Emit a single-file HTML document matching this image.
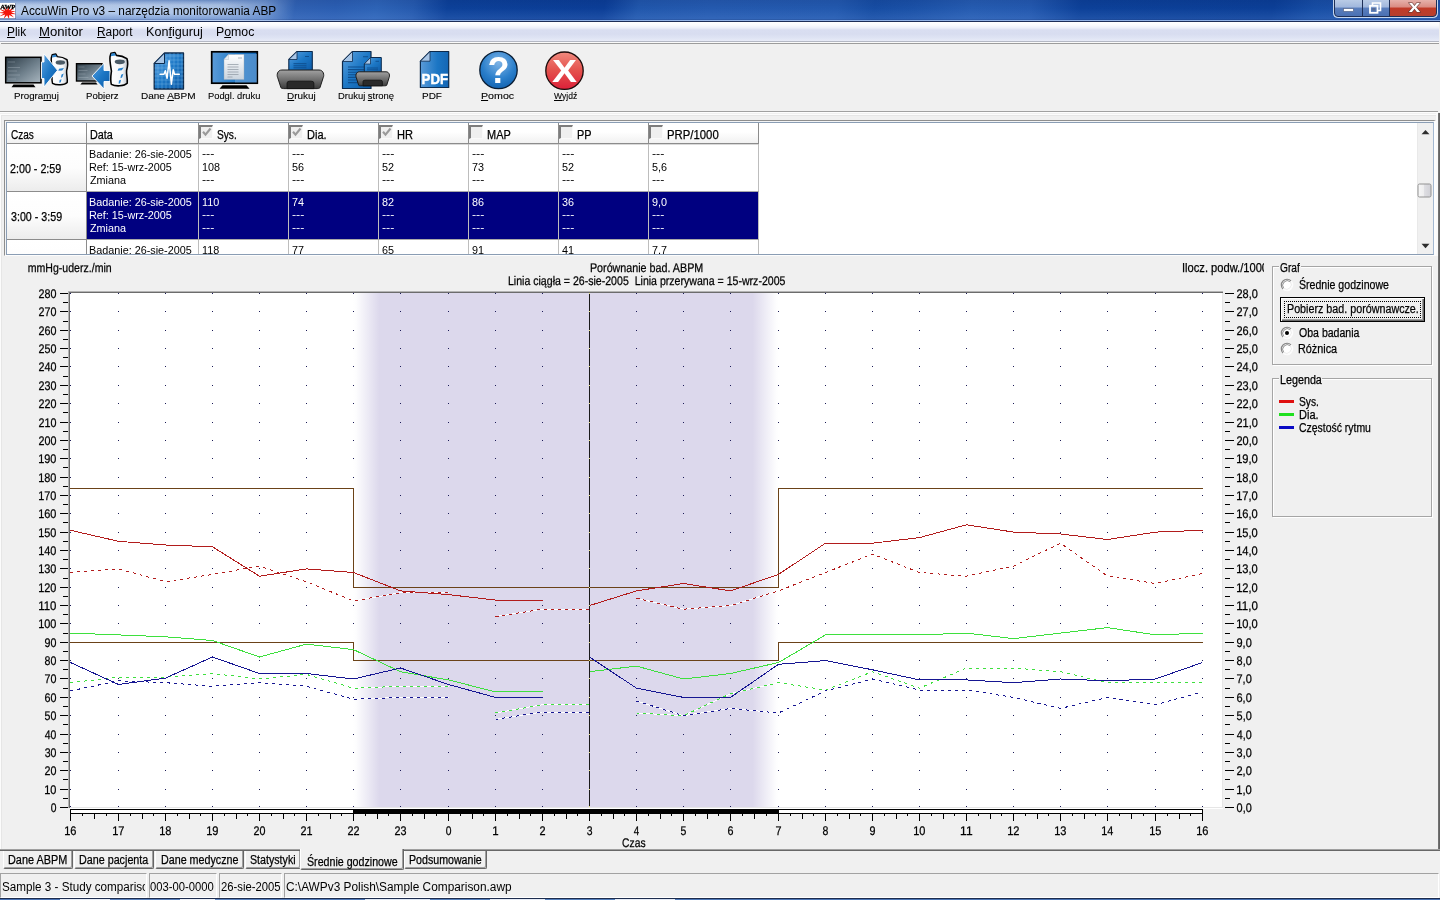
<!DOCTYPE html>
<html lang="pl"><head><meta charset="utf-8"><title>AccuWin Pro v3 – narzędzia monitorowania ABP</title>
<style>
html,body{margin:0;padding:0}
body{width:1440px;height:900px;overflow:hidden;position:relative;background:#f0f0f0;
 font-family:"Liberation Sans",sans-serif;color:#000}
.t{position:absolute;display:block;white-space:pre;transform-origin:0 0}
.abs,div,svg{position:absolute}
u{text-decoration:underline;text-underline-offset:1px}
#app{left:0;top:0;width:1440px;height:900px;will-change:transform}
.t{-webkit-text-stroke:0.25px currentColor}
#chart text{stroke:#000;stroke-width:0.25px}
.t.n{-webkit-text-stroke:0}
.t.s{-webkit-text-stroke:0.1px currentColor}

</style></head>
<body>
<div id="app">
<div id="titlebar" style="left:0;top:0;width:1440px;height:22px;overflow:hidden;background:#0c3f97">
<div style="left:0;top:0;width:1440px;height:20px;background:linear-gradient(100deg,#a9c2e6 0px,#a6bfe5 150px,#98b4de 220px,#6c91cc 262px,#2f60b1 292px,#2a5db1 332px,#2d63b6 372px,#2559ad 408px,#0c4098 442px,#0b3d96 596px,#2056ab 630px,#2459ae 700px,#2258ad 826px,#164ca2 862px,#1a50a6 898px,#255bb0 958px,#2358ae 1016px,#0c4098 1066px,#0b3e96 1255px,#174da4 1296px,#1c50a6 1336px,#1c50a6 1440px)"></div>
<div style="left:0;top:0;width:1440px;height:20px;background:linear-gradient(180deg,rgba(0,10,60,.08) 0,rgba(255,255,255,0) 8px,rgba(140,185,255,.14) 19px)"></div>
<div style="left:0;top:0;width:300px;height:20px;background:linear-gradient(180deg,rgba(50,95,170,.42) 0,rgba(80,120,190,.20) 2px,rgba(255,255,255,.16) 5px,rgba(255,255,255,.16) 13px,rgba(60,100,175,.30) 19px);-webkit-mask-image:linear-gradient(90deg,#000 0,#000 215px,transparent 290px);mask-image:linear-gradient(90deg,#000 0,#000 215px,transparent 290px)"></div>
<div style="left:0;top:19px;width:1440px;height:1px;background:rgba(10,30,90,.16)"></div>
<div style="left:0;top:20px;width:1440px;height:1px;background:linear-gradient(90deg,#c3d6f4 0,#bdd2f2 230px,#93b3e6 300px,#8fb0e4 1440px)"></div>
<div style="left:0;top:21px;width:1440px;height:1px;background:#1d2e58"></div>
<svg style="left:0;top:3px" width="16" height="16" viewBox="0 3 16 16"><rect x="0" y="3" width="16" height="16" fill="#fff"/><path d="M16.8 10.6L11.4 12.6L16.9 14.4L10.8 14.0L14.0 17.5L9.2 14.9L9.1 19.1L7.1 15.2L3.7 18.7L5.2 14.6L-0.5 16.3L4.0 13.4L-2.1 12.7L4.0 11.9L-0.6 9.1L5.1 10.7L3.5 6.6L7.0 10.0L8.8 6.0L9.1 10.2L13.8 7.5L10.8 11.2z" fill="#f4160c"/><text x="0.2" y="8.8" font-family="Liberation Serif,serif" font-weight="bold" font-size="7" textLength="15.300" lengthAdjust="spacingAndGlyphs" fill="#000" stroke="#000" stroke-width=".3">AWP</text><path d="M0 18.500h16M15.500 3v16" stroke="#5a6c9c" stroke-width="1" opacity=".7" fill="none"/></svg>
<span class="t n" style="left:21.40px;top:4px;font-size:12.5px;line-height:14px;transform:scaleX(0.9467);">AccuWin Pro v3 – narzędzia monitorowania ABP</span>
<svg style="left:1332px;top:0" width="108" height="20" viewBox="0 0 108 20"><defs><linearGradient id="wb1" x1="0" y1="0" x2="0" y2="1"><stop offset="0" stop-color="#b9cbe6"/><stop offset=".45" stop-color="#9fb6dc"/><stop offset=".46" stop-color="#5b7fbd"/><stop offset="1" stop-color="#4a70b3"/></linearGradient><linearGradient id="wb2" x1="0" y1="0" x2="0" y2="1"><stop offset="0" stop-color="#e6b1aa"/><stop offset=".45" stop-color="#d98a80"/><stop offset=".46" stop-color="#c23a27"/><stop offset="1" stop-color="#b5402f"/></linearGradient></defs><path d="M1.5 -1V13.5a4 4 0 0 0 4 4H101.5a4 4 0 0 0 4-4V-1z" fill="#dfe9f7" stroke="#c5d6ee" stroke-width="1"/><path d="M2.5 0V13a3.5 3.5 0 0 0 3.5 3.5H30V0z" fill="url(#wb1)"/><path d="M31 0H57V16.5H31z" fill="url(#wb1)"/><path d="M58 0H104.5V13a3.5 3.5 0 0 1-3.5 3.5H58z" fill="url(#wb2)"/><path d="M2.5 0V13a3.5 3.5 0 0 0 3.5 3.5H101a3.5 3.5 0 0 0 3.5-3.5V0M30.5 0V16.5M57.5 0V16.5" fill="none" stroke="#1e2f57" stroke-width="1"/><rect x="11.5" y="8.5" width="10" height="3" fill="#fff" stroke="#5a6c92" stroke-width=".8"/><path d="M40.5 5.5v-2.500h8v7.500h-2.500" fill="none" stroke="#fff" stroke-width="1.6"/><rect x="38" y="5.800" width="7.500" height="7" fill="none" stroke="#fff" stroke-width="1.800"/><rect x="40.200" y="8" width="3" height="2.600" fill="#5a6c92"/><text x="76.700" y="12.300" font-family="Liberation Sans,sans-serif" font-weight="bold" font-size="16" textLength="11.500" lengthAdjust="spacingAndGlyphs" fill="#fff" stroke="#5e3732" stroke-width="1" paint-order="stroke">x</text></svg>
</div>
<div id="menubar" style="left:0;top:22px;width:1440px;height:22px;background:#f0f0f0">
<div style="left:0;top:0;width:1439px;height:19px;background:linear-gradient(180deg,#fff 0,#fafbfe 3px,#eceff9 6px,#e2e6f5 7px,#d9def1 8px,#d8ddf0 12px,#dfe4f4 16px,#e8ebf7 19px)"></div>
<div style="left:0;top:19px;width:1439px;height:1px;background:#b4b8c4"></div>
<div style="left:0;top:20px;width:1439px;height:1px;background:#fafafa"></div>
<div style="left:1px;top:21px;width:1438px;height:1px;background:#9c9c9c"></div>
<span class="t n" style="left:6.95px;top:3px;font-size:12.5px;line-height:14px;transform:scaleX(0.9485);"><u>P</u>lik</span>
<span class="t n" style="left:39.25px;top:3px;font-size:12.5px;line-height:14px;transform:scaleX(1.0519);"><u>M</u>onitor</span>
<span class="t n" style="left:96.55px;top:3px;font-size:12.5px;line-height:14px;transform:scaleX(0.9507);"><u>R</u>aport</span>
<span class="t n" style="left:145.69px;top:3px;font-size:12.5px;line-height:14px;transform:scaleX(1.0085);">Kon<u>f</u>iguruj</span>
<span class="t n" style="left:215.61px;top:3px;font-size:12.5px;line-height:14px;transform:scaleX(0.9850);">P<u>o</u>moc</span>
</div>
<div id="toolbar" style="left:0;top:44px;width:1440px;height:69px">
<div style="left:0;top:67px;width:1438px;height:1px;background:#a0a0a0"></div>
<div style="left:0;top:68px;width:1438px;height:1px;background:#fdfdfd"></div>
<svg width="0" height="0" style="left:0;top:0"><defs><linearGradient id="gScr" x1="0" y1="0" x2="1" y2="1"><stop offset="0" stop-color="#2c3b46"/><stop offset=".55" stop-color="#6f808c"/><stop offset="1" stop-color="#a9b6bf"/></linearGradient><linearGradient id="gBlu" x1="0" y1="0" x2="1" y2="1"><stop offset="0" stop-color="#5fa3e0"/><stop offset=".5" stop-color="#1d78c6"/><stop offset="1" stop-color="#0d5aa6"/></linearGradient><linearGradient id="gBlu2" x1="0" y1="0" x2="1" y2="0"><stop offset="0" stop-color="#5b9bd8"/><stop offset=".6" stop-color="#1c76c4"/><stop offset="1" stop-color="#1466b4"/></linearGradient><linearGradient id="gDev" x1="0" y1="0" x2="1" y2="0"><stop offset="0" stop-color="#fff"/><stop offset=".7" stop-color="#f4f6f8"/><stop offset="1" stop-color="#b9c0c8"/></linearGradient><linearGradient id="gPrn" x1="0" y1="0" x2="0" y2="1"><stop offset="0" stop-color="#a2a2a2"/><stop offset=".5" stop-color="#707070"/><stop offset="1" stop-color="#3c3c3c"/></linearGradient><linearGradient id="gPap" x1="0" y1="0" x2="0" y2="1"><stop offset="0" stop-color="#fff"/><stop offset="1" stop-color="#c9d3dd"/></linearGradient><radialGradient id="gHelp" cx=".5" cy=".3" r=".8"><stop offset="0" stop-color="#7fb4e6"/><stop offset=".55" stop-color="#2b7fcb"/><stop offset="1" stop-color="#0b5aa8"/></radialGradient><linearGradient id="gExit" x1="0" y1="0" x2="0" y2="1"><stop offset="0" stop-color="#f08a7e"/><stop offset=".5" stop-color="#e4514d"/><stop offset="1" stop-color="#dd2039"/></linearGradient></defs></svg>
<svg style="left:0;top:4px" width="72" height="44" viewBox="0 48 72 44"><rect x="5.700" y="57.300" width="35.300" height="25.500" fill="url(#gScr)" stroke="#000" stroke-width="1.500"/><path d="M8 62h7M8 67.500h12M8 71h9M8 75h12M8 79h8" stroke="#b8c4cc" stroke-width=".6" opacity=".55"/><path d="M13.500 84.600h20l2 2.600h-24z" fill="#000"/><g transform="translate(48.8,53.5) scale(0.98)"><path d="M3.500 1.200L7.200 .6L8.600 3.200C12 3.400 15.500 4.200 18.500 6.200C19.800 10 19.200 14 18.200 17.500C17.800 21 19.300 25 18.800 29.500C16 32.300 8 32.800 3.800 30.500C2.600 26 3.400 22 3.900 18C3.200 13 2 8 2.600 4.200z" fill="url(#gDev)" stroke="#000" stroke-width="1.500" stroke-linejoin="round"/><path d="M3.900 1.500L7 1L8 3.400L3.300 4z" fill="#2f86cf"/><ellipse cx="11.800" cy="9.300" rx="4.800" ry="2.300" fill="#4a5a66"/><path d="M10.500 15.500l5-.8-1.800 2.600-4 .4zM13 21.500l2.200-1-1.200 3.600-1.600.6zM11 27l2-.8-.8 3.200-1.500.5z" fill="#2a82cc"/></g><path d="M41.500 62h2.500v-8.200L57.500 70.300L44 87v-8.500h-2.500z" fill="url(#gBlu)" stroke="#fff" stroke-width=".9"/></svg>
<span class="t s" style="left:14.02px;top:46px;font-size:9.6px;line-height:11px;transform:scaleX(1.0148);">Progra<u>m</u>uj</span>
<svg style="left:72px;top:4px" width="62" height="44" viewBox="72 48 62 44"><rect x="76.500" y="63.700" width="25.500" height="17.300" fill="url(#gScr)" stroke="#000" stroke-width="1.400"/><path d="M78.500 67h6M78.500 70.500h9M78.500 74h7M78.500 77.500h10" stroke="#b8c4cc" stroke-width=".6" opacity=".5"/><path d="M82 82.400h14l1.600 2h-17.200z" fill="#000"/><path d="M110 70.500h-6v-7.300L92 76l12 13v-7.500h6z" fill="url(#gBlu)" stroke="#fff" stroke-width=".9"/><g transform="translate(107.3,52) scale(1.06)"><path d="M3.500 1.200L7.200 .6L8.600 3.200C12 3.400 15.500 4.200 18.500 6.200C19.800 10 19.200 14 18.200 17.500C17.800 21 19.300 25 18.800 29.500C16 32.300 8 32.800 3.800 30.500C2.600 26 3.400 22 3.900 18C3.200 13 2 8 2.600 4.200z" fill="url(#gDev)" stroke="#000" stroke-width="1.500" stroke-linejoin="round"/><path d="M3.900 1.500L7 1L8 3.400L3.300 4z" fill="#2f86cf"/><ellipse cx="11.800" cy="9.300" rx="4.800" ry="2.300" fill="#4a5a66"/><path d="M10.500 15.500l5-.8-1.800 2.600-4 .4zM13 21.500l2.200-1-1.200 3.600-1.600.6zM11 27l2-.8-.8 3.200-1.500.5z" fill="#2a82cc"/></g></svg>
<span class="t s" style="left:86.03px;top:46px;font-size:9.6px;line-height:11px;">Pob<u>i</u>erz</span>
<svg style="left:150px;top:4px" width="40" height="44" viewBox="150 48 40 44"><path d="M164.500 53h19v36h-29.300V63.500z" fill="url(#gBlu)" stroke="#0c2a4c" stroke-width="1.300" stroke-linejoin="round"/><path d="M158 64v25M162 60v29M166 56v33M170 53v36M174 53v36M178 53v36M182 53v36M154.500 68h29M154.500 72h29M154.500 76h29M154.500 80h29M154.500 84h29M160 64h23.500M164 60h19.500M166 56h17.500" stroke="#9fd0f4" stroke-width=".5" opacity=".6"/><path d="M164.500 53v10.500h-10.300z" fill="#a9c6e6" stroke="#0c2a4c" stroke-width="1" stroke-linejoin="round"/><path d="M160 74.200h4l1.300-3.500 1.800 7.500 2-17.500 2.300 23.500 1.800-14.500 1.300 4.500h4.800" fill="none" stroke="#fff" stroke-width="1.500" stroke-linejoin="round" stroke-linecap="round"/></svg>
<span class="t s" style="left:141.20px;top:46px;font-size:9.6px;line-height:11px;transform:scaleX(1.0436);">Dane <u>A</u>BPM</span>
<svg style="left:206px;top:4px" width="58" height="44" viewBox="206 48 58 44"><rect x="211.700" y="51.800" width="45.600" height="31.400" fill="url(#gBlu2)" stroke="#000" stroke-width="1.700"/><path d="M236 55.500h13.500v12" fill="none" stroke="#9ec2e8" stroke-width="0" /><rect x="235" y="54" width="22" height="28.500" fill="#8fb8e4" opacity=".45"/><path d="M228.500 54.500h15.500v25h-20v-20z" fill="url(#gPap)" stroke="#9aa7b4" stroke-width=".4"/><path d="M228.500 54.500v5h-4.500z" fill="#e8edf2" stroke="#aab4be" stroke-width=".4"/><path d="M227.500 64.500h11M227.500 67h11M227.500 69.500h11M227.500 72h11M227.500 74.500h11M227.500 77h5M238 58h4" stroke="#8d97a1" stroke-width=".7"/><path d="M222.500 85.300h24l3 3.500h-30z" fill="#000"/></svg>
<span class="t s" style="left:208.15px;top:46px;font-size:9.6px;line-height:11px;transform:scaleX(0.9731);">Podgl. druku</span>
<svg style="left:272px;top:4px" width="58" height="44" viewBox="272 48 58 44"><path d="M297 51.500h15.300v19h-23.500v-11z" fill="url(#gBlu)" stroke="#0c2a4c" stroke-width="1.100" stroke-linejoin="round"/><path d="M297 51.500v8h-8.200z" fill="#a9c6e6" stroke="#0c2a4c" stroke-width=".8" stroke-linejoin="round"/><path d="M305 56.500h4M293.500 63.700h13M293.500 65.800h13M293.500 67.800h13" stroke="#0f4f8f" stroke-width="1"/><path d="M281.93 70.00H318.97C323.60 70.00 324.53 75.21 323.14 77.81L319.90 87.86Q318.97 88.60 317.12 88.60H283.78Q281.93 88.60 281.00 87.86L277.76 77.81C276.37 75.21 277.30 70.00 281.93 70.00z" fill="url(#gPrn)" stroke="#1c1c1c" stroke-width="1"/><path d="M287.02 88.60V83.02Q287.02 81.16 289.80 81.16H311.10Q313.88 81.16 313.88 83.02V88.60z" fill="#2a2a2a" stroke="#111" stroke-width=".8"/></svg>
<span class="t s" style="left:286.50px;top:46px;font-size:9.6px;line-height:11px;transform:scaleX(1.0360);"><u>D</u>rukuj</span>
<svg style="left:336px;top:4px" width="60" height="44" viewBox="336 48 60 44"><path d="M352.500 51.500h18.500v37h-28.500v-27z" fill="url(#gBlu)" stroke="#0c2a4c" stroke-width="1.200" stroke-linejoin="round"/><path d="M352.500 51.500v10h-10z" fill="#a9c6e6" stroke="#0c2a4c" stroke-width=".8" stroke-linejoin="round"/><path d="M363 56.800h5M348 67h18M348 69.600h18M348 72.200h18M348 74.800h18M348 77.400h18M348 80h18M348 82.600h18" stroke="#0f4f8f" stroke-width="1.100"/><path d="M370.500 57.500h10.800v15h-17v-8.500z" fill="url(#gBlu)" stroke="#0c2a4c" stroke-width="1" stroke-linejoin="round"/><path d="M370.500 57.500v6.500h-6.200z" fill="#a9c6e6" stroke="#0c2a4c" stroke-width=".7" stroke-linejoin="round"/><path d="M375.500 61.300h3.500M367 68h11M367 69.800h11" stroke="#0f4f8f" stroke-width=".9"/><path d="M359.34 71.80H386.06C389.40 71.80 390.07 75.72 389.07 77.68L386.73 85.24Q386.06 85.80 384.72 85.80H360.68Q359.34 85.80 358.67 85.24L356.33 77.68C355.33 75.72 356.00 71.80 359.34 71.80z" fill="url(#gPrn)" stroke="#1c1c1c" stroke-width="1"/><path d="M363.01 85.80V81.60Q363.01 80.20 365.02 80.20H380.38Q382.39 80.20 382.39 81.60V85.80z" fill="#2a2a2a" stroke="#111" stroke-width=".8"/></svg>
<span class="t s" style="left:338.15px;top:46px;font-size:9.6px;line-height:11px;transform:scaleX(0.9818);">Drukuj <u>s</u>tronę</span>
<svg style="left:414px;top:4px" width="40" height="44" viewBox="414 48 40 44"><path d="M430 51.500h18.700v36h-28.300V61.200z" fill="url(#gBlu2)" stroke="#0c2a4c" stroke-width="1.200" stroke-linejoin="round"/><path d="M430 51.500v9.700h-9.600z" fill="#a9c6e6" stroke="#0c2a4c" stroke-width=".8" stroke-linejoin="round"/><text x="421.600" y="83.700" font-family="Liberation Sans,sans-serif" font-weight="bold" font-size="15.5" textLength="26.400" lengthAdjust="spacingAndGlyphs" fill="#fff" stroke="#fff" stroke-width=".5">PDF</text></svg>
<span class="t s" style="left:422.10px;top:46px;font-size:9.6px;line-height:11px;transform:scaleX(1.0389);">PDF</span>
<svg style="left:474px;top:4px" width="50" height="44" viewBox="474 48 50 44"><circle cx="498.500" cy="70" r="18.700" fill="url(#gHelp)" stroke="#0a1d33" stroke-width="1.300"/><text x="498.500" y="82.800" text-anchor="middle" font-family="Liberation Sans,sans-serif" font-weight="bold" font-size="36" fill="#fff">?</text></svg>
<span class="t s" style="left:481.35px;top:46px;font-size:9.6px;line-height:11px;transform:scaleX(1.1093);"><u>P</u>omoc</span>
<svg style="left:540px;top:4px" width="50" height="44" viewBox="540 48 50 44"><circle cx="564.500" cy="70.700" r="18.700" fill="url(#gExit)" stroke="#1a0a0a" stroke-width="1.300"/><text x="564.600" y="82.200" text-anchor="middle" font-family="Liberation Sans,sans-serif" font-weight="bold" font-size="31" textLength="25" lengthAdjust="spacingAndGlyphs" fill="#fff">X</text></svg>
<span class="t s" style="left:553.50px;top:46px;font-size:9.6px;line-height:11px;transform:scaleX(0.8934);"><u>W</u>yjdź</span>
</div>
<div style="left:1436px;top:113px;width:2px;height:736px;background:#fafafa"></div>
<div style="left:1438px;top:113px;width:2px;height:738px;background:linear-gradient(90deg,#787878,#5c5c5c)"></div>
<div style="left:0;top:114px;width:1px;height:735px;background:#fcfcfc"></div>
<div style="left:0;top:114px;width:1438px;height:1px;background:#fcfcfc"></div>
<div style="left:1px;top:115px;width:1px;height:734px;background:#e6e6e6"></div>
<div style="left:1px;top:115px;width:1435px;height:1px;background:#e6e6e6"></div>
<div id="grid" style="left:4px;top:120px;width:1432px;height:136px;box-sizing:border-box;border-top:1px solid #8e8e8e;border-left:1px solid #8e8e8e;border-right:2px solid #fdfdfd;border-bottom:1px solid #fdfdfd;background:#f3f4f5">
<div style="left:1px;top:1px;width:1428px;height:133px;box-sizing:border-box;border:1px solid #8a9db4;border-right-color:#a3b8d1;background:#fff"></div>
</div>
<div id="gridin" style="left:7px;top:123px;width:1426px;height:131px;overflow:hidden;background:#fff">
<div style="left:0px;top:0;width:79px;height:20px;background:linear-gradient(180deg,#fff 0,#fff 45%,#f1f1f1 100%);border-right:1px solid #8c8c8c;border-bottom:1px solid #8c8c8c"></div>
<div style="left:80px;top:0;width:111px;height:20px;background:linear-gradient(180deg,#fff 0,#fff 45%,#f1f1f1 100%);border-right:1px solid #8c8c8c;border-bottom:1px solid #8c8c8c"></div>
<div style="left:192px;top:0;width:89px;height:20px;background:linear-gradient(180deg,#fff 0,#fff 45%,#f1f1f1 100%);border-right:1px solid #8c8c8c;border-bottom:1px solid #8c8c8c"></div>
<div style="left:282px;top:0;width:89px;height:20px;background:linear-gradient(180deg,#fff 0,#fff 45%,#f1f1f1 100%);border-right:1px solid #8c8c8c;border-bottom:1px solid #8c8c8c"></div>
<div style="left:372px;top:0;width:89px;height:20px;background:linear-gradient(180deg,#fff 0,#fff 45%,#f1f1f1 100%);border-right:1px solid #8c8c8c;border-bottom:1px solid #8c8c8c"></div>
<div style="left:462px;top:0;width:89px;height:20px;background:linear-gradient(180deg,#fff 0,#fff 45%,#f1f1f1 100%);border-right:1px solid #8c8c8c;border-bottom:1px solid #8c8c8c"></div>
<div style="left:552px;top:0;width:89px;height:20px;background:linear-gradient(180deg,#fff 0,#fff 45%,#f1f1f1 100%);border-right:1px solid #8c8c8c;border-bottom:1px solid #8c8c8c"></div>
<div style="left:642px;top:0;width:109px;height:20px;background:linear-gradient(180deg,#fff 0,#fff 45%,#f1f1f1 100%);border-right:1px solid #8c8c8c;border-bottom:1px solid #8c8c8c"></div>
<div style="left:0;top:21px;width:752px;height:1px;background:#d9d9d9"></div>
<span class="t" style="left:3.50px;top:5px;font-size:12.5px;line-height:14px;transform:scaleX(0.8018);">Czas</span>
<span class="t" style="left:82.84px;top:5px;font-size:12.5px;line-height:14px;transform:scaleX(0.8649);">Data</span>
<div style="left:192px;top:2px;width:14px;height:14px;box-sizing:border-box;background:#efefef;border-top:2px solid #7d7d7d;border-left:2px solid #7d7d7d;border-right:1px solid #fafafa;border-bottom:1px solid #fafafa"></div>
<svg style="left:192px;top:2px" width="14" height="14" viewBox="0 0 14 14"><path d="M4 6.800l2.500 2.900 5-6.200" fill="none" stroke="#9a9a9a" stroke-width="2.100"/></svg>
<span class="t" style="left:210.44px;top:5px;font-size:12.5px;line-height:14px;transform:scaleX(0.8133);">Sys.</span>
<div style="left:282px;top:2px;width:14px;height:14px;box-sizing:border-box;background:#efefef;border-top:2px solid #7d7d7d;border-left:2px solid #7d7d7d;border-right:1px solid #fafafa;border-bottom:1px solid #fafafa"></div>
<svg style="left:282px;top:2px" width="14" height="14" viewBox="0 0 14 14"><path d="M4 6.800l2.500 2.900 5-6.200" fill="none" stroke="#9a9a9a" stroke-width="2.100"/></svg>
<span class="t" style="left:300.02px;top:5px;font-size:12.5px;line-height:14px;transform:scaleX(0.8795);">Dia.</span>
<div style="left:372px;top:2px;width:14px;height:14px;box-sizing:border-box;background:#efefef;border-top:2px solid #7d7d7d;border-left:2px solid #7d7d7d;border-right:1px solid #fafafa;border-bottom:1px solid #fafafa"></div>
<svg style="left:372px;top:2px" width="14" height="14" viewBox="0 0 14 14"><path d="M4 6.800l2.500 2.900 5-6.200" fill="none" stroke="#9a9a9a" stroke-width="2.100"/></svg>
<span class="t" style="left:390.02px;top:5px;font-size:12.5px;line-height:14px;transform:scaleX(0.8848);">HR</span>
<div style="left:462px;top:2px;width:14px;height:14px;box-sizing:border-box;background:#efefef;border-top:2px solid #7d7d7d;border-left:2px solid #7d7d7d;border-right:1px solid #fafafa;border-bottom:1px solid #fafafa"></div>
<span class="t" style="left:480.02px;top:5px;font-size:12.5px;line-height:14px;transform:scaleX(0.8767);">MAP</span>
<div style="left:552px;top:2px;width:14px;height:14px;box-sizing:border-box;background:#efefef;border-top:2px solid #7d7d7d;border-left:2px solid #7d7d7d;border-right:1px solid #fafafa;border-bottom:1px solid #fafafa"></div>
<span class="t" style="left:570.03px;top:5px;font-size:12.5px;line-height:14px;transform:scaleX(0.8733);">PP</span>
<div style="left:642px;top:2px;width:14px;height:14px;box-sizing:border-box;background:#efefef;border-top:2px solid #7d7d7d;border-left:2px solid #7d7d7d;border-right:1px solid #fafafa;border-bottom:1px solid #fafafa"></div>
<span class="t" style="left:659.99px;top:5px;font-size:12.5px;line-height:14px;transform:scaleX(0.9071);">PRP/1000</span>
<div style="left:0;top:21px;width:79px;height:47px;background:linear-gradient(180deg,#fff 0,#fdfdfd 50%,#ececec 100%);border-right:1px solid #8c8c8c;border-bottom:1px solid #8c8c8c"></div>
<span class="t" style="left:3.46px;top:39px;font-size:12.5px;line-height:14px;transform:scaleX(0.8572);">2:00 - 2:59</span>
<div style="left:0;top:69px;width:79px;height:47px;background:linear-gradient(180deg,#fff 0,#fdfdfd 50%,#ececec 100%);border-right:1px solid #8c8c8c;border-bottom:1px solid #8c8c8c"></div>
<span class="t" style="left:3.63px;top:87px;font-size:12.5px;line-height:14px;transform:scaleX(0.8545);">3:00 - 3:59</span>
<div style="left:0;top:117px;width:79px;height:47px;background:linear-gradient(180deg,#fff 0,#fdfdfd 50%,#ececec 100%);border-right:1px solid #8c8c8c;border-bottom:1px solid #8c8c8c"></div>
<span class="t" style="left:3.79px;top:135px;font-size:12.5px;line-height:14px;transform:scaleX(0.8517);">4:00 - 4:59</span>
<div style="left:80px;top:69px;width:671px;height:47px;background:#000080"></div>
<div style="left:191px;top:21px;width:1px;height:112px;background:#bdbdbd"></div>
<div style="left:281px;top:21px;width:1px;height:112px;background:#bdbdbd"></div>
<div style="left:371px;top:21px;width:1px;height:112px;background:#bdbdbd"></div>
<div style="left:461px;top:21px;width:1px;height:112px;background:#bdbdbd"></div>
<div style="left:551px;top:21px;width:1px;height:112px;background:#bdbdbd"></div>
<div style="left:641px;top:21px;width:1px;height:112px;background:#bdbdbd"></div>
<div style="left:751px;top:21px;width:1px;height:112px;background:#bdbdbd"></div>
<div style="left:80px;top:68px;width:672px;height:1px;background:#a9a9a9"></div>
<div style="left:80px;top:116px;width:672px;height:1px;background:#a9a9a9"></div>
<span class="t n" style="left:82.14px;top:25px;font-size:11px;line-height:12px;transform:scaleX(0.9822);">Badanie: 26-sie-2005</span>
<span class="t n" style="left:82.14px;top:38px;font-size:11px;line-height:12px;transform:scaleX(0.9822);">Ref: 15-wrz-2005</span>
<span class="t n" style="left:82.68px;top:51px;font-size:11px;line-height:12px;transform:scaleX(0.9822);">Zmiana</span>
<span class="t n" style="left:195.31px;top:24px;font-size:11px;line-height:12px;transform:scaleX(1.1227);">---</span>
<span class="t n" style="left:194.99px;top:38px;font-size:11px;line-height:12px;transform:scaleX(0.9822);">108</span>
<span class="t n" style="left:195.31px;top:50px;font-size:11px;line-height:12px;transform:scaleX(1.1227);">---</span>
<span class="t n" style="left:285.31px;top:24px;font-size:11px;line-height:12px;transform:scaleX(1.1227);">---</span>
<span class="t n" style="left:285.37px;top:38px;font-size:11px;line-height:12px;transform:scaleX(0.9822);">56</span>
<span class="t n" style="left:285.31px;top:50px;font-size:11px;line-height:12px;transform:scaleX(1.1227);">---</span>
<span class="t n" style="left:375.31px;top:24px;font-size:11px;line-height:12px;transform:scaleX(1.1227);">---</span>
<span class="t n" style="left:375.37px;top:38px;font-size:11px;line-height:12px;transform:scaleX(0.9822);">52</span>
<span class="t n" style="left:375.31px;top:50px;font-size:11px;line-height:12px;transform:scaleX(1.1227);">---</span>
<span class="t n" style="left:465.11px;top:24px;font-size:11px;line-height:12px;transform:scaleX(1.1227);">---</span>
<span class="t n" style="left:465.06px;top:38px;font-size:11px;line-height:12px;transform:scaleX(0.9822);">73</span>
<span class="t n" style="left:465.11px;top:50px;font-size:11px;line-height:12px;transform:scaleX(1.1227);">---</span>
<span class="t n" style="left:555.11px;top:24px;font-size:11px;line-height:12px;transform:scaleX(1.1227);">---</span>
<span class="t n" style="left:555.17px;top:38px;font-size:11px;line-height:12px;transform:scaleX(0.9822);">52</span>
<span class="t n" style="left:555.11px;top:50px;font-size:11px;line-height:12px;transform:scaleX(1.1227);">---</span>
<span class="t n" style="left:645.11px;top:24px;font-size:11px;line-height:12px;transform:scaleX(1.1227);">---</span>
<span class="t n" style="left:645.17px;top:38px;font-size:11px;line-height:12px;transform:scaleX(0.9822);">5,6</span>
<span class="t n" style="left:645.11px;top:50px;font-size:11px;line-height:12px;transform:scaleX(1.1227);">---</span>
<span class="t n" style="left:82.14px;top:73px;font-size:11px;line-height:12px;transform:scaleX(0.9822);color:#fff;">Badanie: 26-sie-2005</span>
<span class="t n" style="left:82.14px;top:86px;font-size:11px;line-height:12px;transform:scaleX(0.9822);color:#fff;">Ref: 15-wrz-2005</span>
<span class="t n" style="left:82.68px;top:99px;font-size:11px;line-height:12px;transform:scaleX(0.9822);color:#fff;">Zmiana</span>
<span class="t n" style="left:194.99px;top:73px;font-size:11px;line-height:12px;transform:scaleX(0.9822);color:#fff;">110</span>
<span class="t n" style="left:195.31px;top:85px;font-size:11px;line-height:12px;transform:scaleX(1.1227);color:#fff;">---</span>
<span class="t n" style="left:195.31px;top:98px;font-size:11px;line-height:12px;transform:scaleX(1.1227);color:#fff;">---</span>
<span class="t n" style="left:285.26px;top:73px;font-size:11px;line-height:12px;transform:scaleX(0.9822);color:#fff;">74</span>
<span class="t n" style="left:285.31px;top:85px;font-size:11px;line-height:12px;transform:scaleX(1.1227);color:#fff;">---</span>
<span class="t n" style="left:285.31px;top:98px;font-size:11px;line-height:12px;transform:scaleX(1.1227);color:#fff;">---</span>
<span class="t n" style="left:375.37px;top:73px;font-size:11px;line-height:12px;transform:scaleX(0.9822);color:#fff;">82</span>
<span class="t n" style="left:375.31px;top:85px;font-size:11px;line-height:12px;transform:scaleX(1.1227);color:#fff;">---</span>
<span class="t n" style="left:375.31px;top:98px;font-size:11px;line-height:12px;transform:scaleX(1.1227);color:#fff;">---</span>
<span class="t n" style="left:465.17px;top:73px;font-size:11px;line-height:12px;transform:scaleX(0.9822);color:#fff;">86</span>
<span class="t n" style="left:465.11px;top:85px;font-size:11px;line-height:12px;transform:scaleX(1.1227);color:#fff;">---</span>
<span class="t n" style="left:465.11px;top:98px;font-size:11px;line-height:12px;transform:scaleX(1.1227);color:#fff;">---</span>
<span class="t n" style="left:555.22px;top:73px;font-size:11px;line-height:12px;transform:scaleX(0.9822);color:#fff;">36</span>
<span class="t n" style="left:555.11px;top:85px;font-size:11px;line-height:12px;transform:scaleX(1.1227);color:#fff;">---</span>
<span class="t n" style="left:555.11px;top:98px;font-size:11px;line-height:12px;transform:scaleX(1.1227);color:#fff;">---</span>
<span class="t n" style="left:645.11px;top:73px;font-size:11px;line-height:12px;transform:scaleX(0.9822);color:#fff;">9,0</span>
<span class="t n" style="left:645.11px;top:85px;font-size:11px;line-height:12px;transform:scaleX(1.1227);color:#fff;">---</span>
<span class="t n" style="left:645.11px;top:98px;font-size:11px;line-height:12px;transform:scaleX(1.1227);color:#fff;">---</span>
<span class="t n" style="left:82.14px;top:121px;font-size:11px;line-height:12px;transform:scaleX(0.9822);">Badanie: 26-sie-2005</span>
<span class="t n" style="left:82.14px;top:134px;font-size:11px;line-height:12px;transform:scaleX(0.9822);">Ref: 15-wrz-2005</span>
<span class="t n" style="left:82.68px;top:147px;font-size:11px;line-height:12px;transform:scaleX(0.9822);">Zmiana</span>
<span class="t n" style="left:194.99px;top:121px;font-size:11px;line-height:12px;transform:scaleX(0.9822);">118</span>
<span class="t n" style="left:195.31px;top:133px;font-size:11px;line-height:12px;transform:scaleX(1.1227);">---</span>
<span class="t n" style="left:195.31px;top:146px;font-size:11px;line-height:12px;transform:scaleX(1.1227);">---</span>
<span class="t n" style="left:285.26px;top:121px;font-size:11px;line-height:12px;transform:scaleX(0.9822);">77</span>
<span class="t n" style="left:285.31px;top:133px;font-size:11px;line-height:12px;transform:scaleX(1.1227);">---</span>
<span class="t n" style="left:285.31px;top:146px;font-size:11px;line-height:12px;transform:scaleX(1.1227);">---</span>
<span class="t n" style="left:375.26px;top:121px;font-size:11px;line-height:12px;transform:scaleX(0.9822);">65</span>
<span class="t n" style="left:375.31px;top:133px;font-size:11px;line-height:12px;transform:scaleX(1.1227);">---</span>
<span class="t n" style="left:375.31px;top:146px;font-size:11px;line-height:12px;transform:scaleX(1.1227);">---</span>
<span class="t n" style="left:465.11px;top:121px;font-size:11px;line-height:12px;transform:scaleX(0.9822);">91</span>
<span class="t n" style="left:465.11px;top:133px;font-size:11px;line-height:12px;transform:scaleX(1.1227);">---</span>
<span class="t n" style="left:465.11px;top:146px;font-size:11px;line-height:12px;transform:scaleX(1.1227);">---</span>
<span class="t n" style="left:555.38px;top:121px;font-size:11px;line-height:12px;transform:scaleX(0.9822);">41</span>
<span class="t n" style="left:555.11px;top:133px;font-size:11px;line-height:12px;transform:scaleX(1.1227);">---</span>
<span class="t n" style="left:555.11px;top:146px;font-size:11px;line-height:12px;transform:scaleX(1.1227);">---</span>
<span class="t n" style="left:645.06px;top:121px;font-size:11px;line-height:12px;transform:scaleX(0.9822);">7,7</span>
<span class="t n" style="left:645.11px;top:133px;font-size:11px;line-height:12px;transform:scaleX(1.1227);">---</span>
<span class="t n" style="left:645.11px;top:146px;font-size:11px;line-height:12px;transform:scaleX(1.1227);">---</span>
<div style="left:1410px;top:0;width:16px;height:131px;background:#f0f0f0;border-left:1px solid #e9e9e9;box-sizing:border-box"></div>
<svg style="left:1410px;top:0" width="16" height="131" viewBox="1417 123 16 131"><path d="M1421.500 134.300L1425.500 130L1429.500 134.300z" fill="#2e2e2e"/><path d="M1421.500 243.800L1425.500 248.200L1429.500 243.800z" fill="#2e2e2e"/><defs><linearGradient id="gTh" x1="0" y1="0" x2="1" y2="0"><stop offset="0" stop-color="#f7f7f7"/><stop offset=".45" stop-color="#eeeeef"/><stop offset=".5" stop-color="#dedee2"/><stop offset="1" stop-color="#d0d0d6"/></linearGradient></defs><rect x="1418" y="184" width="13" height="13" rx="1.500" fill="url(#gTh)" stroke="#929292" stroke-width="1"/></svg>
</div>
<svg id="chart" style="left:0;top:255px" width="1268" height="594" viewBox="0 255 1268 594" font-family="Liberation Sans,sans-serif" shape-rendering="crispEdges">
<defs><linearGradient id="gSh" gradientUnits="userSpaceOnUse" x1="353" y1="0" x2="779" y2="0"><stop offset="0" stop-color="#ffffff"/><stop offset="0.0070" stop-color="#fdfdfe"/><stop offset="0.0620" stop-color="#dcd8ec"/><stop offset="0.9380" stop-color="#dcd8ec"/><stop offset="0.9930" stop-color="#fdfdfe"/><stop offset="1" stop-color="#ffffff"/></linearGradient></defs>
<rect x="68" y="291" width="1155" height="517" fill="#b4b4b4"/>
<rect x="69" y="292" width="1154" height="516" fill="#6c6c6c"/>
<rect x="70" y="293" width="1153" height="516" fill="#ffffff"/>
<rect x="70" y="807" width="1153" height="1" fill="#e6e6e6"/>
<rect x="1222" y="293" width="1" height="515" fill="#e6e6e6"/>
<rect x="353" y="293" width="426" height="514" fill="url(#gSh)"/>
<path d="M70 806.5h1M70 789.5h1M70 770.5h1M70 752.5h1M70 734.5h1M70 715.5h1M70 697.5h1M70 678.5h1M70 660.5h1M70 642.5h1M70 623.5h1M70 605.5h1M70 587.5h1M70 568.5h1M70 550.5h1M70 532.5h1M70 513.5h1M70 495.5h1M70 477.5h1M70 458.5h1M70 440.5h1M70 422.5h1M70 403.5h1M70 385.5h1M70 366.5h1M70 348.5h1M70 330.5h1M70 311.5h1M70 293.5h1M118 806.5h1M118 789.5h1M118 770.5h1M118 752.5h1M118 734.5h1M118 715.5h1M118 697.5h1M118 678.5h1M118 660.5h1M118 642.5h1M118 623.5h1M118 605.5h1M118 587.5h1M118 568.5h1M118 550.5h1M118 532.5h1M118 513.5h1M118 495.5h1M118 477.5h1M118 458.5h1M118 440.5h1M118 422.5h1M118 403.5h1M118 385.5h1M118 366.5h1M118 348.5h1M118 330.5h1M118 311.5h1M118 293.5h1M165 806.5h1M165 789.5h1M165 770.5h1M165 752.5h1M165 734.5h1M165 715.5h1M165 697.5h1M165 678.5h1M165 660.5h1M165 642.5h1M165 623.5h1M165 605.5h1M165 587.5h1M165 568.5h1M165 550.5h1M165 532.5h1M165 513.5h1M165 495.5h1M165 477.5h1M165 458.5h1M165 440.5h1M165 422.5h1M165 403.5h1M165 385.5h1M165 366.5h1M165 348.5h1M165 330.5h1M165 311.5h1M165 293.5h1M212 806.5h1M212 789.5h1M212 770.5h1M212 752.5h1M212 734.5h1M212 715.5h1M212 697.5h1M212 678.5h1M212 660.5h1M212 642.5h1M212 623.5h1M212 605.5h1M212 587.5h1M212 568.5h1M212 550.5h1M212 532.5h1M212 513.5h1M212 495.5h1M212 477.5h1M212 458.5h1M212 440.5h1M212 422.5h1M212 403.5h1M212 385.5h1M212 366.5h1M212 348.5h1M212 330.5h1M212 311.5h1M212 293.5h1M259 806.5h1M259 789.5h1M259 770.5h1M259 752.5h1M259 734.5h1M259 715.5h1M259 697.5h1M259 678.5h1M259 660.5h1M259 642.5h1M259 623.5h1M259 605.5h1M259 587.5h1M259 568.5h1M259 550.5h1M259 532.5h1M259 513.5h1M259 495.5h1M259 477.5h1M259 458.5h1M259 440.5h1M259 422.5h1M259 403.5h1M259 385.5h1M259 366.5h1M259 348.5h1M259 330.5h1M259 311.5h1M259 293.5h1M306 806.5h1M306 789.5h1M306 770.5h1M306 752.5h1M306 734.5h1M306 715.5h1M306 697.5h1M306 678.5h1M306 660.5h1M306 642.5h1M306 623.5h1M306 605.5h1M306 587.5h1M306 568.5h1M306 550.5h1M306 532.5h1M306 513.5h1M306 495.5h1M306 477.5h1M306 458.5h1M306 440.5h1M306 422.5h1M306 403.5h1M306 385.5h1M306 366.5h1M306 348.5h1M306 330.5h1M306 311.5h1M306 293.5h1M353 806.5h1M353 789.5h1M353 770.5h1M353 752.5h1M353 734.5h1M353 715.5h1M353 697.5h1M353 678.5h1M353 660.5h1M353 642.5h1M353 623.5h1M353 605.5h1M353 587.5h1M353 568.5h1M353 550.5h1M353 532.5h1M353 513.5h1M353 495.5h1M353 477.5h1M353 458.5h1M353 440.5h1M353 422.5h1M353 403.5h1M353 385.5h1M353 366.5h1M353 348.5h1M353 330.5h1M353 311.5h1M353 293.5h1M400 806.5h1M400 789.5h1M400 770.5h1M400 752.5h1M400 734.5h1M400 715.5h1M400 697.5h1M400 678.5h1M400 660.5h1M400 642.5h1M400 623.5h1M400 605.5h1M400 587.5h1M400 568.5h1M400 550.5h1M400 532.5h1M400 513.5h1M400 495.5h1M400 477.5h1M400 458.5h1M400 440.5h1M400 422.5h1M400 403.5h1M400 385.5h1M400 366.5h1M400 348.5h1M400 330.5h1M400 311.5h1M400 293.5h1M448 806.5h1M448 789.5h1M448 770.5h1M448 752.5h1M448 734.5h1M448 715.5h1M448 697.5h1M448 678.5h1M448 660.5h1M448 642.5h1M448 623.5h1M448 605.5h1M448 587.5h1M448 568.5h1M448 550.5h1M448 532.5h1M448 513.5h1M448 495.5h1M448 477.5h1M448 458.5h1M448 440.5h1M448 422.5h1M448 403.5h1M448 385.5h1M448 366.5h1M448 348.5h1M448 330.5h1M448 311.5h1M448 293.5h1M495 806.5h1M495 789.5h1M495 770.5h1M495 752.5h1M495 734.5h1M495 715.5h1M495 697.5h1M495 678.5h1M495 660.5h1M495 642.5h1M495 623.5h1M495 605.5h1M495 587.5h1M495 568.5h1M495 550.5h1M495 532.5h1M495 513.5h1M495 495.5h1M495 477.5h1M495 458.5h1M495 440.5h1M495 422.5h1M495 403.5h1M495 385.5h1M495 366.5h1M495 348.5h1M495 330.5h1M495 311.5h1M495 293.5h1M542 806.5h1M542 789.5h1M542 770.5h1M542 752.5h1M542 734.5h1M542 715.5h1M542 697.5h1M542 678.5h1M542 660.5h1M542 642.5h1M542 623.5h1M542 605.5h1M542 587.5h1M542 568.5h1M542 550.5h1M542 532.5h1M542 513.5h1M542 495.5h1M542 477.5h1M542 458.5h1M542 440.5h1M542 422.5h1M542 403.5h1M542 385.5h1M542 366.5h1M542 348.5h1M542 330.5h1M542 311.5h1M542 293.5h1M589 806.5h1M589 789.5h1M589 770.5h1M589 752.5h1M589 734.5h1M589 715.5h1M589 697.5h1M589 678.5h1M589 660.5h1M589 642.5h1M589 623.5h1M589 605.5h1M589 587.5h1M589 568.5h1M589 550.5h1M589 532.5h1M589 513.5h1M589 495.5h1M589 477.5h1M589 458.5h1M589 440.5h1M589 422.5h1M589 403.5h1M589 385.5h1M589 366.5h1M589 348.5h1M589 330.5h1M589 311.5h1M589 293.5h1M636 806.5h1M636 789.5h1M636 770.5h1M636 752.5h1M636 734.5h1M636 715.5h1M636 697.5h1M636 678.5h1M636 660.5h1M636 642.5h1M636 623.5h1M636 605.5h1M636 587.5h1M636 568.5h1M636 550.5h1M636 532.5h1M636 513.5h1M636 495.5h1M636 477.5h1M636 458.5h1M636 440.5h1M636 422.5h1M636 403.5h1M636 385.5h1M636 366.5h1M636 348.5h1M636 330.5h1M636 311.5h1M636 293.5h1M683 806.5h1M683 789.5h1M683 770.5h1M683 752.5h1M683 734.5h1M683 715.5h1M683 697.5h1M683 678.5h1M683 660.5h1M683 642.5h1M683 623.5h1M683 605.5h1M683 587.5h1M683 568.5h1M683 550.5h1M683 532.5h1M683 513.5h1M683 495.5h1M683 477.5h1M683 458.5h1M683 440.5h1M683 422.5h1M683 403.5h1M683 385.5h1M683 366.5h1M683 348.5h1M683 330.5h1M683 311.5h1M683 293.5h1M730 806.5h1M730 789.5h1M730 770.5h1M730 752.5h1M730 734.5h1M730 715.5h1M730 697.5h1M730 678.5h1M730 660.5h1M730 642.5h1M730 623.5h1M730 605.5h1M730 587.5h1M730 568.5h1M730 550.5h1M730 532.5h1M730 513.5h1M730 495.5h1M730 477.5h1M730 458.5h1M730 440.5h1M730 422.5h1M730 403.5h1M730 385.5h1M730 366.5h1M730 348.5h1M730 330.5h1M730 311.5h1M730 293.5h1M778 806.5h1M778 789.5h1M778 770.5h1M778 752.5h1M778 734.5h1M778 715.5h1M778 697.5h1M778 678.5h1M778 660.5h1M778 642.5h1M778 623.5h1M778 605.5h1M778 587.5h1M778 568.5h1M778 550.5h1M778 532.5h1M778 513.5h1M778 495.5h1M778 477.5h1M778 458.5h1M778 440.5h1M778 422.5h1M778 403.5h1M778 385.5h1M778 366.5h1M778 348.5h1M778 330.5h1M778 311.5h1M778 293.5h1M825 806.5h1M825 789.5h1M825 770.5h1M825 752.5h1M825 734.5h1M825 715.5h1M825 697.5h1M825 678.5h1M825 660.5h1M825 642.5h1M825 623.5h1M825 605.5h1M825 587.5h1M825 568.5h1M825 550.5h1M825 532.5h1M825 513.5h1M825 495.5h1M825 477.5h1M825 458.5h1M825 440.5h1M825 422.5h1M825 403.5h1M825 385.5h1M825 366.5h1M825 348.5h1M825 330.5h1M825 311.5h1M825 293.5h1M872 806.5h1M872 789.5h1M872 770.5h1M872 752.5h1M872 734.5h1M872 715.5h1M872 697.5h1M872 678.5h1M872 660.5h1M872 642.5h1M872 623.5h1M872 605.5h1M872 587.5h1M872 568.5h1M872 550.5h1M872 532.5h1M872 513.5h1M872 495.5h1M872 477.5h1M872 458.5h1M872 440.5h1M872 422.5h1M872 403.5h1M872 385.5h1M872 366.5h1M872 348.5h1M872 330.5h1M872 311.5h1M872 293.5h1M919 806.5h1M919 789.5h1M919 770.5h1M919 752.5h1M919 734.5h1M919 715.5h1M919 697.5h1M919 678.5h1M919 660.5h1M919 642.5h1M919 623.5h1M919 605.5h1M919 587.5h1M919 568.5h1M919 550.5h1M919 532.5h1M919 513.5h1M919 495.5h1M919 477.5h1M919 458.5h1M919 440.5h1M919 422.5h1M919 403.5h1M919 385.5h1M919 366.5h1M919 348.5h1M919 330.5h1M919 311.5h1M919 293.5h1M966 806.5h1M966 789.5h1M966 770.5h1M966 752.5h1M966 734.5h1M966 715.5h1M966 697.5h1M966 678.5h1M966 660.5h1M966 642.5h1M966 623.5h1M966 605.5h1M966 587.5h1M966 568.5h1M966 550.5h1M966 532.5h1M966 513.5h1M966 495.5h1M966 477.5h1M966 458.5h1M966 440.5h1M966 422.5h1M966 403.5h1M966 385.5h1M966 366.5h1M966 348.5h1M966 330.5h1M966 311.5h1M966 293.5h1M1013 806.5h1M1013 789.5h1M1013 770.5h1M1013 752.5h1M1013 734.5h1M1013 715.5h1M1013 697.5h1M1013 678.5h1M1013 660.5h1M1013 642.5h1M1013 623.5h1M1013 605.5h1M1013 587.5h1M1013 568.5h1M1013 550.5h1M1013 532.5h1M1013 513.5h1M1013 495.5h1M1013 477.5h1M1013 458.5h1M1013 440.5h1M1013 422.5h1M1013 403.5h1M1013 385.5h1M1013 366.5h1M1013 348.5h1M1013 330.5h1M1013 311.5h1M1013 293.5h1M1060 806.5h1M1060 789.5h1M1060 770.5h1M1060 752.5h1M1060 734.5h1M1060 715.5h1M1060 697.5h1M1060 678.5h1M1060 660.5h1M1060 642.5h1M1060 623.5h1M1060 605.5h1M1060 587.5h1M1060 568.5h1M1060 550.5h1M1060 532.5h1M1060 513.5h1M1060 495.5h1M1060 477.5h1M1060 458.5h1M1060 440.5h1M1060 422.5h1M1060 403.5h1M1060 385.5h1M1060 366.5h1M1060 348.5h1M1060 330.5h1M1060 311.5h1M1060 293.5h1M1107 806.5h1M1107 789.5h1M1107 770.5h1M1107 752.5h1M1107 734.5h1M1107 715.5h1M1107 697.5h1M1107 678.5h1M1107 660.5h1M1107 642.5h1M1107 623.5h1M1107 605.5h1M1107 587.5h1M1107 568.5h1M1107 550.5h1M1107 532.5h1M1107 513.5h1M1107 495.5h1M1107 477.5h1M1107 458.5h1M1107 440.5h1M1107 422.5h1M1107 403.5h1M1107 385.5h1M1107 366.5h1M1107 348.5h1M1107 330.5h1M1107 311.5h1M1107 293.5h1M1155 806.5h1M1155 789.5h1M1155 770.5h1M1155 752.5h1M1155 734.5h1M1155 715.5h1M1155 697.5h1M1155 678.5h1M1155 660.5h1M1155 642.5h1M1155 623.5h1M1155 605.5h1M1155 587.5h1M1155 568.5h1M1155 550.5h1M1155 532.5h1M1155 513.5h1M1155 495.5h1M1155 477.5h1M1155 458.5h1M1155 440.5h1M1155 422.5h1M1155 403.5h1M1155 385.5h1M1155 366.5h1M1155 348.5h1M1155 330.5h1M1155 311.5h1M1155 293.5h1M1202 806.5h1M1202 789.5h1M1202 770.5h1M1202 752.5h1M1202 734.5h1M1202 715.5h1M1202 697.5h1M1202 678.5h1M1202 660.5h1M1202 642.5h1M1202 623.5h1M1202 605.5h1M1202 587.5h1M1202 568.5h1M1202 550.5h1M1202 532.5h1M1202 513.5h1M1202 495.5h1M1202 477.5h1M1202 458.5h1M1202 440.5h1M1202 422.5h1M1202 403.5h1M1202 385.5h1M1202 366.5h1M1202 348.5h1M1202 330.5h1M1202 311.5h1M1202 293.5h1" stroke="#1c1c58" stroke-width="1" fill="none"/>
<rect x="70" y="488" width="284" height="1" fill="#6b4218"/><rect x="353" y="488" width="1" height="100" fill="#6b4218"/><rect x="353" y="587" width="426" height="1" fill="#6b4218"/><rect x="778" y="488" width="1" height="100" fill="#6b4218"/><rect x="778" y="488" width="425" height="1" fill="#6b4218"/>
<rect x="70" y="642" width="284" height="1" fill="#6b4218"/><rect x="353" y="642" width="1" height="19" fill="#6b4218"/><rect x="353" y="660" width="426" height="1" fill="#6b4218"/><rect x="778" y="642" width="1" height="19" fill="#6b4218"/><rect x="778" y="642" width="425" height="1" fill="#6b4218"/>
<polyline points="70.5,572.5 118.5,568.9 165.5,581.7 212.5,574.4 259.5,566.1 306.5,581.7 353.5,601.0 400.5,592.7 448.5,592.7" fill="none" stroke="#ffffff" stroke-width="1"/><polyline points="70.5,572.5 118.5,568.9 165.5,581.7 212.5,574.4 259.5,566.1 306.5,581.7 353.5,601.0 400.5,592.7 448.5,592.7" fill="none" stroke="#b21c1c" stroke-width="1" stroke-dasharray="3 4"/><polyline points="495.5,616.6 542.5,609.2 589.5,609.2" fill="none" stroke="#ffffff" stroke-width="1"/><polyline points="495.5,616.6 542.5,609.2 589.5,609.2" fill="none" stroke="#b21c1c" stroke-width="1" stroke-dasharray="3 4"/><polyline points="636.5,598.2 683.5,609.2 730.5,605.6 778.5,590.9 825.5,572.5 872.5,554.2 919.5,572.5 966.5,576.2 1013.5,566.1 1060.5,543.2 1107.5,576.2 1155.5,583.5 1202.5,573.4" fill="none" stroke="#ffffff" stroke-width="1"/><polyline points="636.5,598.2 683.5,609.2 730.5,605.6 778.5,590.9 825.5,572.5 872.5,554.2 919.5,572.5 966.5,576.2 1013.5,566.1 1060.5,543.2 1107.5,576.2 1155.5,583.5 1202.5,573.4" fill="none" stroke="#b21c1c" stroke-width="1" stroke-dasharray="3 4"/><polyline points="70.5,682.7 118.5,677.2 165.5,677.2 212.5,673.5 259.5,679.0 306.5,674.4 353.5,688.2 400.5,686.3 448.5,686.3" fill="none" stroke="#ffffff" stroke-width="1"/><polyline points="70.5,682.7 118.5,677.2 165.5,677.2 212.5,673.5 259.5,679.0 306.5,674.4 353.5,688.2 400.5,686.3 448.5,686.3" fill="none" stroke="#3ee03e" stroke-width="1" stroke-dasharray="3 4"/><polyline points="495.5,713.0 542.5,704.7 589.5,704.7" fill="none" stroke="#ffffff" stroke-width="1"/><polyline points="495.5,713.0 542.5,704.7 589.5,704.7" fill="none" stroke="#3ee03e" stroke-width="1" stroke-dasharray="3 4"/><polyline points="636.5,713.0 683.5,715.7 730.5,693.7 778.5,682.7 825.5,690.0 872.5,671.7 919.5,688.2 966.5,668.0 1013.5,668.0 1060.5,671.7 1107.5,682.7 1155.5,682.7 1202.5,682.7" fill="none" stroke="#ffffff" stroke-width="1"/><polyline points="636.5,713.0 683.5,715.7 730.5,693.7 778.5,682.7 825.5,690.0 872.5,671.7 919.5,688.2 966.5,668.0 1013.5,668.0 1060.5,671.7 1107.5,682.7 1155.5,682.7 1202.5,682.7" fill="none" stroke="#3ee03e" stroke-width="1" stroke-dasharray="3 4"/><polyline points="70.5,690.9 118.5,680.8 165.5,682.7 212.5,686.3 259.5,682.7 306.5,686.3 353.5,699.2 400.5,697.4 448.5,697.4" fill="none" stroke="#ffffff" stroke-width="1"/><polyline points="70.5,690.9 118.5,680.8 165.5,682.7 212.5,686.3 259.5,682.7 306.5,686.3 353.5,699.2 400.5,697.4 448.5,697.4" fill="none" stroke="#161692" stroke-width="1" stroke-dasharray="3 4"/><polyline points="495.5,719.4 542.5,712.0 589.5,712.0" fill="none" stroke="#ffffff" stroke-width="1"/><polyline points="495.5,719.4 542.5,712.0 589.5,712.0" fill="none" stroke="#161692" stroke-width="1" stroke-dasharray="3 4"/><polyline points="636.5,701.0 683.5,715.7 730.5,708.4 778.5,713.0 825.5,690.9 872.5,679.0 919.5,690.0 966.5,690.0 1013.5,697.4 1060.5,708.4 1107.5,697.4 1155.5,704.7 1202.5,691.9" fill="none" stroke="#ffffff" stroke-width="1"/><polyline points="636.5,701.0 683.5,715.7 730.5,708.4 778.5,713.0 825.5,690.9 872.5,679.0 919.5,690.0 966.5,690.0 1013.5,697.4 1060.5,708.4 1107.5,697.4 1155.5,704.7 1202.5,691.9" fill="none" stroke="#161692" stroke-width="1" stroke-dasharray="3 4"/>
<polyline points="70.5,530.3 118.5,541.3 165.5,545.0 212.5,546.8 259.5,576.2 306.5,568.9 353.5,572.5 400.5,590.9 448.5,594.6 495.5,600.1 542.5,600.1" fill="none" stroke="#b21c1c" stroke-width="1"/><polyline points="589.5,605.6 636.5,590.9 683.5,583.5 730.5,590.9 778.5,574.4 825.5,543.2 872.5,543.2 919.5,537.6 966.5,524.8 1013.5,532.1 1060.5,534.0 1107.5,539.5 1155.5,532.1 1202.5,530.3" fill="none" stroke="#b21c1c" stroke-width="1"/><polyline points="70.5,633.1 118.5,634.9 165.5,636.8 212.5,640.5 259.5,657.0 306.5,644.1 353.5,649.6 400.5,671.7 448.5,679.9 495.5,691.9 542.5,691.9" fill="none" stroke="#3ee03e" stroke-width="1"/><polyline points="589.5,671.7 636.5,666.1 683.5,679.0 730.5,673.5 778.5,662.5 825.5,634.9 872.5,634.9 919.5,634.9 966.5,633.1 1013.5,638.6 1060.5,633.1 1107.5,627.6 1155.5,634.9 1202.5,633.1" fill="none" stroke="#3ee03e" stroke-width="1"/><polyline points="70.5,662.5 118.5,684.5 165.5,678.1 212.5,657.0 259.5,673.5 306.5,673.5 353.5,679.0 400.5,668.0 448.5,684.5 495.5,697.4 542.5,697.4" fill="none" stroke="#161692" stroke-width="1"/><polyline points="589.5,657.0 636.5,688.2 683.5,697.4 730.5,697.4 778.5,664.3 825.5,660.6 872.5,669.8 919.5,679.9 966.5,679.9 1013.5,682.7 1060.5,679.0 1107.5,680.8 1155.5,679.0 1202.5,662.5" fill="none" stroke="#161692" stroke-width="1"/>
<rect x="589" y="293" width="1" height="514" fill="#1a1a1a"/>
<path d="M589 806.5h1M589 789.5h1M589 770.5h1M589 752.5h1M589 734.5h1M589 715.5h1M589 697.5h1M589 678.5h1M589 660.5h1M589 642.5h1M589 623.5h1M589 605.5h1M589 587.5h1M589 568.5h1M589 550.5h1M589 532.5h1M589 513.5h1M589 495.5h1M589 477.5h1M589 458.5h1M589 440.5h1M589 422.5h1M589 403.5h1M589 385.5h1M589 366.5h1M589 348.5h1M589 330.5h1M589 311.5h1M589 293.5h1" stroke="#e6e07a" stroke-width="1" fill="none"/>
<path d="M60 807.5h8M63 798.5h5M60 789.5h8M63 779.5h5M60 770.5h8M63 761.5h5M60 752.5h8M63 743.5h5M60 734.5h8M63 724.5h5M60 715.5h8M63 706.5h5M60 697.5h8M63 688.5h5M60 678.5h8M63 669.5h5M60 660.5h8M63 651.5h5M60 642.5h8M63 633.5h5M60 623.5h8M63 614.5h5M60 605.5h8M63 596.5h5M60 587.5h8M63 578.5h5M60 568.5h8M63 559.5h5M60 550.5h8M63 541.5h5M60 532.5h8M63 522.5h5M60 513.5h8M63 504.5h5M60 495.5h8M63 486.5h5M60 477.5h8M63 467.5h5M60 458.5h8M63 449.5h5M60 440.5h8M63 431.5h5M60 422.5h8M63 412.5h5M60 403.5h8M63 394.5h5M60 385.5h8M63 376.5h5M60 366.5h8M63 357.5h5M60 348.5h8M63 339.5h5M60 330.5h8M63 321.5h5M60 311.5h8M63 302.5h5M60 293.5h8" stroke="#000" stroke-width="1" fill="none"/>
<path d="M1225 807.5h9M1225 798.5h5M1225 789.5h9M1225 779.5h5M1225 770.5h9M1225 761.5h5M1225 752.5h9M1225 743.5h5M1225 734.5h9M1225 724.5h5M1225 715.5h9M1225 706.5h5M1225 697.5h9M1225 688.5h5M1225 678.5h9M1225 669.5h5M1225 660.5h9M1225 651.5h5M1225 642.5h9M1225 633.5h5M1225 623.5h9M1225 614.5h5M1225 605.5h9M1225 596.5h5M1225 587.5h9M1225 578.5h5M1225 568.5h9M1225 559.5h5M1225 550.5h9M1225 541.5h5M1225 532.5h9M1225 522.5h5M1225 513.5h9M1225 504.5h5M1225 495.5h9M1225 486.5h5M1225 477.5h9M1225 467.5h5M1225 458.5h9M1225 449.5h5M1225 440.5h9M1225 431.5h5M1225 422.5h9M1225 412.5h5M1225 403.5h9M1225 394.5h5M1225 385.5h9M1225 376.5h5M1225 366.5h9M1225 357.5h5M1225 348.5h9M1225 339.5h5M1225 330.5h9M1225 321.5h5M1225 311.5h9M1225 302.5h5M1225 293.5h9" stroke="#000" stroke-width="1" fill="none"/>
<rect x="70" y="809" width="1133" height="5" fill="#000"/>
<rect x="71" y="810" width="282" height="3" fill="#fff"/>
<rect x="779" y="810" width="423" height="3" fill="#fff"/>
<path d="M70.5 814v7M82.5 814v2M94.5 814v4.500M106.5 814v2M118.5 814v7M130.5 814v2M142.5 814v4.500M153.5 814v2M165.5 814v7M177.5 814v2M189.5 814v4.500M200.5 814v2M212.5 814v7M224.5 814v2M236.5 814v4.500M247.5 814v2M259.5 814v7M271.5 814v2M283.5 814v4.500M294.5 814v2M306.5 814v7M318.5 814v2M330.5 814v4.500M341.5 814v2M353.5 814v7M365.5 814v2M377.5 814v4.500M388.5 814v2M400.5 814v7M412.5 814v2M424.5 814v4.500M436.5 814v2M448.5 814v7M460.5 814v2M472.5 814v4.500M483.5 814v2M495.5 814v7M507.5 814v2M519.5 814v4.500M530.5 814v2M542.5 814v7M554.5 814v2M566.5 814v4.500M577.5 814v2M589.5 814v7M601.5 814v2M613.5 814v4.500M624.5 814v2M636.5 814v7M648.5 814v2M660.5 814v4.500M671.5 814v2M683.5 814v7M695.5 814v2M707.5 814v4.500M718.5 814v2M730.5 814v7M742.5 814v2M754.5 814v4.500M766.5 814v2M778.5 814v7M790.5 814v2M802.5 814v4.500M813.5 814v2M825.5 814v7M837.5 814v2M849.5 814v4.500M860.5 814v2M872.5 814v7M884.5 814v2M896.5 814v4.500M907.5 814v2M919.5 814v7M931.5 814v2M943.5 814v4.500M954.5 814v2M966.5 814v7M978.5 814v2M990.5 814v4.500M1001.5 814v2M1013.5 814v7M1025.5 814v2M1037.5 814v4.500M1048.5 814v2M1060.5 814v7M1072.5 814v2M1084.5 814v4.500M1095.5 814v2M1107.5 814v7M1119.5 814v2M1131.5 814v4.500M1143.5 814v2M1155.5 814v7M1167.5 814v2M1179.5 814v4.500M1190.5 814v2M1202.5 814v7" stroke="#000" stroke-width="1" fill="none"/>
<g shape-rendering="auto" text-rendering="geometricPrecision" fill="#000">
<text x="50.64" y="812" font-size="12.5" textLength="5.73" lengthAdjust="spacingAndGlyphs" xml:space="preserve">0</text>
<text x="44.17" y="794" font-size="12.5" textLength="12.24" lengthAdjust="spacingAndGlyphs" xml:space="preserve">10</text>
<text x="44.46" y="775" font-size="12.5" textLength="11.94" lengthAdjust="spacingAndGlyphs" xml:space="preserve">20</text>
<text x="44.63" y="757" font-size="12.5" textLength="11.77" lengthAdjust="spacingAndGlyphs" xml:space="preserve">30</text>
<text x="44.79" y="739" font-size="12.5" textLength="11.60" lengthAdjust="spacingAndGlyphs" xml:space="preserve">40</text>
<text x="44.57" y="720" font-size="12.5" textLength="11.82" lengthAdjust="spacingAndGlyphs" xml:space="preserve">50</text>
<text x="44.46" y="702" font-size="12.5" textLength="11.94" lengthAdjust="spacingAndGlyphs" xml:space="preserve">60</text>
<text x="44.46" y="683" font-size="12.5" textLength="11.94" lengthAdjust="spacingAndGlyphs" xml:space="preserve">70</text>
<text x="44.57" y="665" font-size="12.5" textLength="11.82" lengthAdjust="spacingAndGlyphs" xml:space="preserve">80</text>
<text x="44.52" y="647" font-size="12.5" textLength="11.88" lengthAdjust="spacingAndGlyphs" xml:space="preserve">90</text>
<text x="38.18" y="628" font-size="12.5" textLength="18.24" lengthAdjust="spacingAndGlyphs" xml:space="preserve">100</text>
<text x="38.14" y="610" font-size="12.5" textLength="18.25" lengthAdjust="spacingAndGlyphs" xml:space="preserve">110</text>
<text x="38.18" y="592" font-size="12.5" textLength="18.24" lengthAdjust="spacingAndGlyphs" xml:space="preserve">120</text>
<text x="38.18" y="573" font-size="12.5" textLength="18.24" lengthAdjust="spacingAndGlyphs" xml:space="preserve">130</text>
<text x="38.18" y="555" font-size="12.5" textLength="18.24" lengthAdjust="spacingAndGlyphs" xml:space="preserve">140</text>
<text x="38.18" y="537" font-size="12.5" textLength="18.24" lengthAdjust="spacingAndGlyphs" xml:space="preserve">150</text>
<text x="38.18" y="518" font-size="12.5" textLength="18.24" lengthAdjust="spacingAndGlyphs" xml:space="preserve">160</text>
<text x="38.18" y="500" font-size="12.5" textLength="18.24" lengthAdjust="spacingAndGlyphs" xml:space="preserve">170</text>
<text x="38.18" y="482" font-size="12.5" textLength="18.24" lengthAdjust="spacingAndGlyphs" xml:space="preserve">180</text>
<text x="38.18" y="463" font-size="12.5" textLength="18.24" lengthAdjust="spacingAndGlyphs" xml:space="preserve">190</text>
<text x="38.46" y="445" font-size="12.5" textLength="17.95" lengthAdjust="spacingAndGlyphs" xml:space="preserve">200</text>
<text x="38.46" y="427" font-size="12.5" textLength="17.95" lengthAdjust="spacingAndGlyphs" xml:space="preserve">210</text>
<text x="38.46" y="408" font-size="12.5" textLength="17.95" lengthAdjust="spacingAndGlyphs" xml:space="preserve">220</text>
<text x="38.46" y="390" font-size="12.5" textLength="17.95" lengthAdjust="spacingAndGlyphs" xml:space="preserve">230</text>
<text x="38.46" y="371" font-size="12.5" textLength="17.95" lengthAdjust="spacingAndGlyphs" xml:space="preserve">240</text>
<text x="38.46" y="353" font-size="12.5" textLength="17.95" lengthAdjust="spacingAndGlyphs" xml:space="preserve">250</text>
<text x="38.46" y="335" font-size="12.5" textLength="17.95" lengthAdjust="spacingAndGlyphs" xml:space="preserve">260</text>
<text x="38.46" y="316" font-size="12.5" textLength="17.95" lengthAdjust="spacingAndGlyphs" xml:space="preserve">270</text>
<text x="38.46" y="298" font-size="12.5" textLength="17.95" lengthAdjust="spacingAndGlyphs" xml:space="preserve">280</text>
<text x="1236.62" y="812" font-size="12.5" textLength="15.17" lengthAdjust="spacingAndGlyphs" xml:space="preserve">0,0</text>
<text x="1236.16" y="794" font-size="12.5" textLength="15.64" lengthAdjust="spacingAndGlyphs" xml:space="preserve">1,0</text>
<text x="1236.45" y="775" font-size="12.5" textLength="15.34" lengthAdjust="spacingAndGlyphs" xml:space="preserve">2,0</text>
<text x="1236.62" y="757" font-size="12.5" textLength="15.17" lengthAdjust="spacingAndGlyphs" xml:space="preserve">3,0</text>
<text x="1236.78" y="739" font-size="12.5" textLength="14.99" lengthAdjust="spacingAndGlyphs" xml:space="preserve">4,0</text>
<text x="1236.56" y="720" font-size="12.5" textLength="15.22" lengthAdjust="spacingAndGlyphs" xml:space="preserve">5,0</text>
<text x="1236.45" y="702" font-size="12.5" textLength="15.34" lengthAdjust="spacingAndGlyphs" xml:space="preserve">6,0</text>
<text x="1236.45" y="683" font-size="12.5" textLength="15.34" lengthAdjust="spacingAndGlyphs" xml:space="preserve">7,0</text>
<text x="1236.56" y="665" font-size="12.5" textLength="15.22" lengthAdjust="spacingAndGlyphs" xml:space="preserve">8,0</text>
<text x="1236.51" y="647" font-size="12.5" textLength="15.28" lengthAdjust="spacingAndGlyphs" xml:space="preserve">9,0</text>
<text x="1236.17" y="628" font-size="12.5" textLength="21.64" lengthAdjust="spacingAndGlyphs" xml:space="preserve">10,0</text>
<text x="1236.13" y="610" font-size="12.5" textLength="21.70" lengthAdjust="spacingAndGlyphs" xml:space="preserve">11,0</text>
<text x="1236.17" y="592" font-size="12.5" textLength="21.64" lengthAdjust="spacingAndGlyphs" xml:space="preserve">12,0</text>
<text x="1236.17" y="573" font-size="12.5" textLength="21.64" lengthAdjust="spacingAndGlyphs" xml:space="preserve">13,0</text>
<text x="1236.17" y="555" font-size="12.5" textLength="21.64" lengthAdjust="spacingAndGlyphs" xml:space="preserve">14,0</text>
<text x="1236.17" y="537" font-size="12.5" textLength="21.64" lengthAdjust="spacingAndGlyphs" xml:space="preserve">15,0</text>
<text x="1236.17" y="518" font-size="12.5" textLength="21.64" lengthAdjust="spacingAndGlyphs" xml:space="preserve">16,0</text>
<text x="1236.17" y="500" font-size="12.5" textLength="21.64" lengthAdjust="spacingAndGlyphs" xml:space="preserve">17,0</text>
<text x="1236.17" y="482" font-size="12.5" textLength="21.64" lengthAdjust="spacingAndGlyphs" xml:space="preserve">18,0</text>
<text x="1236.17" y="463" font-size="12.5" textLength="21.64" lengthAdjust="spacingAndGlyphs" xml:space="preserve">19,0</text>
<text x="1236.45" y="445" font-size="12.5" textLength="21.35" lengthAdjust="spacingAndGlyphs" xml:space="preserve">20,0</text>
<text x="1236.45" y="427" font-size="12.5" textLength="21.35" lengthAdjust="spacingAndGlyphs" xml:space="preserve">21,0</text>
<text x="1236.45" y="408" font-size="12.5" textLength="21.35" lengthAdjust="spacingAndGlyphs" xml:space="preserve">22,0</text>
<text x="1236.45" y="390" font-size="12.5" textLength="21.35" lengthAdjust="spacingAndGlyphs" xml:space="preserve">23,0</text>
<text x="1236.45" y="371" font-size="12.5" textLength="21.35" lengthAdjust="spacingAndGlyphs" xml:space="preserve">24,0</text>
<text x="1236.45" y="353" font-size="12.5" textLength="21.35" lengthAdjust="spacingAndGlyphs" xml:space="preserve">25,0</text>
<text x="1236.45" y="335" font-size="12.5" textLength="21.35" lengthAdjust="spacingAndGlyphs" xml:space="preserve">26,0</text>
<text x="1236.45" y="316" font-size="12.5" textLength="21.35" lengthAdjust="spacingAndGlyphs" xml:space="preserve">27,0</text>
<text x="1236.45" y="298" font-size="12.5" textLength="21.35" lengthAdjust="spacingAndGlyphs" xml:space="preserve">28,0</text>
<text x="64.17" y="835" font-size="12.5" textLength="12.30" lengthAdjust="spacingAndGlyphs" xml:space="preserve">16</text>
<text x="112.17" y="835" font-size="12.5" textLength="12.36" lengthAdjust="spacingAndGlyphs" xml:space="preserve">17</text>
<text x="159.17" y="835" font-size="12.5" textLength="12.30" lengthAdjust="spacingAndGlyphs" xml:space="preserve">18</text>
<text x="206.17" y="835" font-size="12.5" textLength="12.36" lengthAdjust="spacingAndGlyphs" xml:space="preserve">19</text>
<text x="253.46" y="835" font-size="12.5" textLength="11.94" lengthAdjust="spacingAndGlyphs" xml:space="preserve">20</text>
<text x="300.46" y="835" font-size="12.5" textLength="12.05" lengthAdjust="spacingAndGlyphs" xml:space="preserve">21</text>
<text x="347.46" y="835" font-size="12.5" textLength="12.05" lengthAdjust="spacingAndGlyphs" xml:space="preserve">22</text>
<text x="394.46" y="835" font-size="12.5" textLength="12.00" lengthAdjust="spacingAndGlyphs" xml:space="preserve">23</text>
<text x="445.64" y="835" font-size="12.5" textLength="5.73" lengthAdjust="spacingAndGlyphs" xml:space="preserve">0</text>
<text x="492.14" y="835" font-size="12.5" textLength="6.39" lengthAdjust="spacingAndGlyphs" xml:space="preserve">1</text>
<text x="539.46" y="835" font-size="12.5" textLength="6.05" lengthAdjust="spacingAndGlyphs" xml:space="preserve">2</text>
<text x="586.64" y="835" font-size="12.5" textLength="5.79" lengthAdjust="spacingAndGlyphs" xml:space="preserve">3</text>
<text x="633.80" y="835" font-size="12.5" textLength="5.45" lengthAdjust="spacingAndGlyphs" xml:space="preserve">4</text>
<text x="680.58" y="835" font-size="12.5" textLength="5.85" lengthAdjust="spacingAndGlyphs" xml:space="preserve">5</text>
<text x="727.46" y="835" font-size="12.5" textLength="5.98" lengthAdjust="spacingAndGlyphs" xml:space="preserve">6</text>
<text x="775.46" y="835" font-size="12.5" textLength="6.05" lengthAdjust="spacingAndGlyphs" xml:space="preserve">7</text>
<text x="822.58" y="835" font-size="12.5" textLength="5.85" lengthAdjust="spacingAndGlyphs" xml:space="preserve">8</text>
<text x="869.52" y="835" font-size="12.5" textLength="5.98" lengthAdjust="spacingAndGlyphs" xml:space="preserve">9</text>
<text x="913.17" y="835" font-size="12.5" textLength="12.24" lengthAdjust="spacingAndGlyphs" xml:space="preserve">10</text>
<text x="960.10" y="835" font-size="12.5" textLength="12.48" lengthAdjust="spacingAndGlyphs" xml:space="preserve">11</text>
<text x="1007.17" y="835" font-size="12.5" textLength="12.36" lengthAdjust="spacingAndGlyphs" xml:space="preserve">12</text>
<text x="1054.17" y="835" font-size="12.5" textLength="12.30" lengthAdjust="spacingAndGlyphs" xml:space="preserve">13</text>
<text x="1101.18" y="835" font-size="12.5" textLength="12.11" lengthAdjust="spacingAndGlyphs" xml:space="preserve">14</text>
<text x="1149.17" y="835" font-size="12.5" textLength="12.30" lengthAdjust="spacingAndGlyphs" xml:space="preserve">15</text>
<text x="1196.17" y="835" font-size="12.5" textLength="12.30" lengthAdjust="spacingAndGlyphs" xml:space="preserve">16</text>
<text x="622.09" y="847" font-size="12.5" textLength="23.46" lengthAdjust="spacingAndGlyphs" xml:space="preserve">Czas</text>
<text x="589.94" y="272" font-size="12.5" textLength="113.29" lengthAdjust="spacingAndGlyphs" xml:space="preserve">Porównanie bad. ABPM</text>
<text x="507.95" y="285" font-size="12.5" textLength="277.50" lengthAdjust="spacingAndGlyphs" xml:space="preserve">Linia ciągła = 26-sie-2005  Linia przerywana = 15-wrz-2005</text>
<text x="27.81" y="272" font-size="12.5" textLength="83.83" lengthAdjust="spacingAndGlyphs" xml:space="preserve">mmHg-uderz./min</text>
</g>
</svg>
<div style="left:1180px;top:258px;width:84px;height:18px;overflow:hidden"><span class="t" style="left:1.60px;top:3px;font-size:12.5px;line-height:14px;transform:scaleX(0.8905);">Ilocz. podw./1000</span></div>
<div id="side" style="left:1264px;top:256px;width:174px;height:593px;background:#f0f0f0">
<div style="left:8px;top:10px;width:160px;height:99px;box-sizing:border-box;border:1px solid #a5a5a5;box-shadow:1px 1px 0 #fff, inset 1px 1px 0 #fff"></div><div style="left:15px;top:4px;width:22px;height:13px;background:#f0f0f0"></div>
<span class="t" style="left:16.49px;top:5px;font-size:12.5px;line-height:14px;transform:scaleX(0.8106);">Graf</span>
<svg style="left:16px;top:22px" width="14" height="14" viewBox="0 0 14 14"><circle cx="7" cy="7" r="5.200" fill="#fff"/><path d="M2.900 11.100A5.800 5.800 0 0 1 11.100 2.900" fill="none" stroke="#858585" stroke-width="1.100"/><path d="M3.700 10.300A4.700 4.700 0 0 1 10.300 3.700" fill="none" stroke="#4a4a4a" stroke-width=".8" opacity=".75"/><path d="M11.100 2.900A5.800 5.800 0 0 1 2.900 11.100" fill="none" stroke="#fcfcfc" stroke-width="1.100"/><path d="M10.300 3.700A4.700 4.700 0 0 1 3.700 10.300" fill="none" stroke="#e6e6e6" stroke-width=".8"/></svg>
<span class="t" style="left:34.52px;top:22px;font-size:12.5px;line-height:14px;transform:scaleX(0.8456);">Średnie godzinowe</span>
<div style="left:16px;top:41px;width:145px;height:25px;box-sizing:border-box;border:1px solid #000;background:#f0f0f0;box-shadow:inset 1px 1px 0 #fff,inset -1px -1px 0 #6a6a6a,inset -2px -2px 0 #a0a0a0"></div>
<div style="left:20px;top:45px;width:137px;height:17px;box-sizing:border-box;border:1px dotted #000"></div>
<span class="t" style="left:22.54px;top:46px;font-size:12.5px;line-height:14px;transform:scaleX(0.8584);">Pobierz bad. porównawcze.</span>
<svg style="left:16px;top:70px" width="14" height="14" viewBox="0 0 14 14"><circle cx="7" cy="7" r="5.200" fill="#fff"/><path d="M2.900 11.100A5.800 5.800 0 0 1 11.100 2.900" fill="none" stroke="#858585" stroke-width="1.100"/><path d="M3.700 10.300A4.700 4.700 0 0 1 10.300 3.700" fill="none" stroke="#4a4a4a" stroke-width=".8" opacity=".75"/><path d="M11.100 2.900A5.800 5.800 0 0 1 2.900 11.100" fill="none" stroke="#fcfcfc" stroke-width="1.100"/><path d="M10.300 3.700A4.700 4.700 0 0 1 3.700 10.300" fill="none" stroke="#e6e6e6" stroke-width=".8"/><circle cx="7" cy="7" r="2" fill="#000"/></svg>
<span class="t" style="left:34.53px;top:70px;font-size:12.5px;line-height:14px;transform:scaleX(0.8443);">Oba badania</span>
<svg style="left:16px;top:86px" width="14" height="14" viewBox="0 0 14 14"><circle cx="7" cy="7" r="5.200" fill="#fff"/><path d="M2.900 11.100A5.800 5.800 0 0 1 11.100 2.900" fill="none" stroke="#858585" stroke-width="1.100"/><path d="M3.700 10.300A4.700 4.700 0 0 1 10.300 3.700" fill="none" stroke="#4a4a4a" stroke-width=".8" opacity=".75"/><path d="M11.100 2.900A5.800 5.800 0 0 1 2.900 11.100" fill="none" stroke="#fcfcfc" stroke-width="1.100"/><path d="M10.300 3.700A4.700 4.700 0 0 1 3.700 10.300" fill="none" stroke="#e6e6e6" stroke-width=".8"/></svg>
<span class="t" style="left:34.13px;top:86px;font-size:12.5px;line-height:14px;transform:scaleX(0.8668);">Różnica</span>
<div style="left:8px;top:122px;width:160px;height:139px;box-sizing:border-box;border:1px solid #a5a5a5;box-shadow:1px 1px 0 #fff, inset 1px 1px 0 #fff"></div><div style="left:15px;top:116px;width:43px;height:13px;background:#f0f0f0"></div>
<span class="t" style="left:16.14px;top:117px;font-size:12.5px;line-height:14px;transform:scaleX(0.8598);">Legenda</span>
<div style="left:15px;top:144px;width:15px;height:3px;background:#df0f0f"></div>
<span class="t" style="left:35.24px;top:139px;font-size:12.5px;line-height:14px;transform:scaleX(0.8177);">Sys.</span>
<div style="left:15px;top:157px;width:15px;height:3px;background:#1fe01f"></div>
<span class="t" style="left:34.82px;top:152px;font-size:12.5px;line-height:14px;transform:scaleX(0.8795);">Dia.</span>
<div style="left:15px;top:170px;width:15px;height:3px;background:#0a0ac4"></div>
<span class="t" style="left:35.18px;top:165px;font-size:12.5px;line-height:14px;transform:scaleX(0.8348);">Częstość rytmu</span>
</div>
<div style="left:0;top:849px;width:1440px;height:1px;background:#a0a0a0"></div>
<div style="left:0;top:850px;width:1440px;height:1px;background:#676767"></div>
<div style="left:3px;top:851px;width:70px;height:18px;box-sizing:border-box;background:#f0f0f0;border-left:1px solid #fff;border-right:1px solid #676767;border-bottom:1px solid #676767;box-shadow:inset -1px -1px 0 #a0a0a0;border-radius:0 0 2px 2px"></div>
<span class="t" style="left:8.03px;top:853px;font-size:12.5px;line-height:14px;transform:scaleX(0.8696);">Dane ABPM</span>
<div style="left:74px;top:851px;width:80px;height:18px;box-sizing:border-box;background:#f0f0f0;border-left:1px solid #fff;border-right:1px solid #676767;border-bottom:1px solid #676767;box-shadow:inset -1px -1px 0 #a0a0a0;border-radius:0 0 2px 2px"></div>
<span class="t" style="left:79.14px;top:853px;font-size:12.5px;line-height:14px;transform:scaleX(0.8596);">Dane pacjenta</span>
<div style="left:155px;top:851px;width:89px;height:18px;box-sizing:border-box;background:#f0f0f0;border-left:1px solid #fff;border-right:1px solid #676767;border-bottom:1px solid #676767;box-shadow:inset -1px -1px 0 #a0a0a0;border-radius:0 0 2px 2px"></div>
<span class="t" style="left:161.04px;top:853px;font-size:12.5px;line-height:14px;transform:scaleX(0.8580);">Dane medyczne</span>
<div style="left:245px;top:851px;width:56px;height:18px;box-sizing:border-box;background:#f0f0f0;border-left:1px solid #fff;border-right:1px solid #676767;border-bottom:1px solid #676767;box-shadow:inset -1px -1px 0 #a0a0a0;border-radius:0 0 2px 2px"></div>
<span class="t" style="left:250.12px;top:853px;font-size:12.5px;line-height:14px;transform:scaleX(0.8528);">Statystyki</span>
<div style="left:300px;top:849px;width:104px;height:21px;box-sizing:border-box;background:#f0f0f0;border-left:1px solid #fff;border-right:1px solid #676767;border-bottom:1px solid #676767;box-shadow:inset -1px -1px 0 #a0a0a0;border-radius:0 0 2px 2px"></div>
<span class="t" style="left:307.02px;top:855px;font-size:12.5px;line-height:14px;transform:scaleX(0.8523);">Średnie godzinowe</span>
<div style="left:404px;top:851px;width:83px;height:18px;box-sizing:border-box;background:#f0f0f0;border-left:1px solid #fff;border-right:1px solid #676767;border-bottom:1px solid #676767;box-shadow:inset -1px -1px 0 #a0a0a0;border-radius:0 0 2px 2px"></div>
<span class="t" style="left:408.75px;top:853px;font-size:12.5px;line-height:14px;transform:scaleX(0.8506);">Podsumowanie</span>
<div id="status" style="left:0;top:873px;width:1440px;height:27px;background:#f0f0f0">
<div style="left:0px;top:0;width:147px;height:25px;box-sizing:border-box;border-top:1px solid #a2a2a2;border-left:1px solid #a2a2a2;border-right:1px solid #fff;border-bottom:1px solid #fff"></div>
<div style="left:149px;top:0;width:68px;height:25px;box-sizing:border-box;border-top:1px solid #a2a2a2;border-left:1px solid #a2a2a2;border-right:1px solid #fff;border-bottom:1px solid #fff"></div>
<div style="left:219px;top:0;width:63px;height:25px;box-sizing:border-box;border-top:1px solid #a2a2a2;border-left:1px solid #a2a2a2;border-right:1px solid #fff;border-bottom:1px solid #fff"></div>
<div style="left:284px;top:0;width:1155px;height:25px;box-sizing:border-box;border-top:1px solid #a2a2a2;border-left:1px solid #a2a2a2;border-right:1px solid #fff;border-bottom:1px solid #fff"></div>
<div style="left:2px;top:3px;width:143px;height:20px;overflow:hidden"><span class="t n" style="left:-0.03px;top:4px;font-size:12.5px;line-height:14px;transform:scaleX(0.9336);">Sample 3 - Study comparison</span></div>
<span class="t n" style="left:150.41px;top:7px;font-size:12.5px;line-height:14px;transform:scaleX(0.9000);">003-00-0000</span>
<span class="t n" style="left:220.84px;top:7px;font-size:12.5px;line-height:14px;transform:scaleX(0.9017);">26-sie-2005</span>
<span class="t n" style="left:286.31px;top:7px;font-size:12.5px;line-height:14px;transform:scaleX(0.9485);">C:\AWPv3 Polish\Sample Comparison.awp</span>
<div style="left:0;top:25px;width:1440px;height:1px;background:#1d2c4d"></div>
<div style="left:0;top:26px;width:1440px;height:1px;background:linear-gradient(90deg,#4a73b5 0,#4a73b5 60px,#e8eef8 60px,#e8eef8 110px,#5b82be 110px,#5b82be 180px,#eef2fa 180px,#eef2fa 215px,#5d84c0 215px,#4f79b9 365px,#dfe8f5 365px,#dfe8f5 430px,#5580bd 430px,#5580bd 490px,#e6ecf7 490px,#e6ecf7 545px,#5580bd 545px,#5580bd 615px,#e6ecf7 615px,#e6ecf7 675px,#4f79b9 675px,#466fb0 1440px)"></div>
</div>
</div>
</body></html>
